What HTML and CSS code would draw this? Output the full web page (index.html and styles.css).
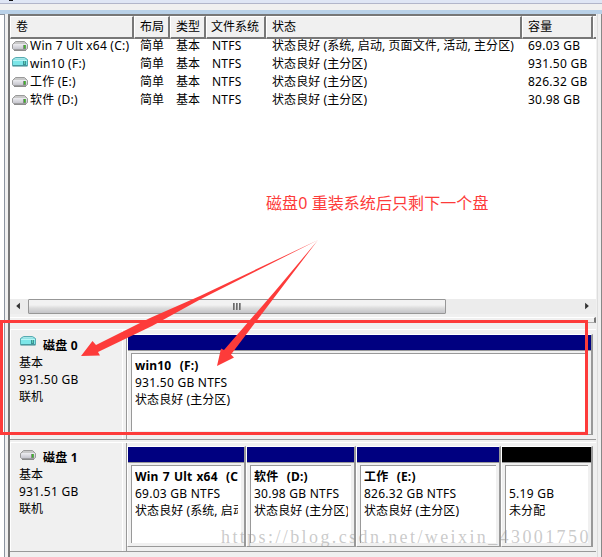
FILE: index.html
```html
<!DOCTYPE html>
<html lang="zh-CN">
<head>
<meta charset="utf-8">
<title>磁盘管理</title>
<link rel="stylesheet" href="styles.css">
</head>
<body>
<svg class="defs" width="0" height="0">
  <defs>
    <linearGradient id="grayTop" x1="0" y1="0" x2="0" y2="1"><stop offset="0" stop-color="#c4c4c4"/><stop offset="1" stop-color="#a5a5a5"/></linearGradient>
    <linearGradient id="grayFace" x1="0" y1="0" x2="0" y2="1"><stop offset="0" stop-color="#ededf1"/><stop offset="1" stop-color="#c2c2ca"/></linearGradient>
    <symbol id="drive" viewBox="0 0 16 10">
      <path d="M3.5 .5H12.5L15.5 3.5V7.5L14 9H2L.5 7.5V3.5Z" fill="url(#grayTop)" stroke="#9a9a9a"/>
      <path d="M4 1H12L14 3H2Z" fill="#c9c9c9"/>
      <rect x="1" y="3" width="14" height="5.5" rx="1" fill="url(#grayFace)"/>
      <path d="M2 9.2H14" stroke="#707070"/>
      <rect x="11" y="4" width="3" height="4" fill="#8a8a8a"/><rect x="12" y="4" width="1.5" height="3.5" fill="#3cb828"/>
    </symbol>
    <symbol id="driveCyan" viewBox="0 0 16 10">
      <path d="M3.5 .5H12.5L15.5 2.5V8.5H.5V2.5Z" fill="#7fdde0" stroke="#58aab0"/>
      <path d="M4 1H12L14 2.5H2Z" fill="#a5e6e8"/>
      <rect x="1" y="3" width="14" height="5" fill="#7ce6e8"/>
      <path d="M1 3.5H15" stroke="#b8f6f6"/>
      <path d="M.5 9H15.5" stroke="#34868c"/>
      <rect x="11" y="4" width="3" height="4" fill="#3b9398"/><rect x="12" y="4" width="1" height="3" fill="#5fd0b0"/>
    </symbol>
  </defs>
</svg>
<div class="window">
  <div class="title-strip"><i></i></div>
  <div class="tool-strip"></div>
  <div class="blue-strip"></div>
  <div class="main">
    <div class="tree-edge"></div>
    <div class="pane">
      <div class="list">
        <div class="row head"><span>卷</span><span>布局</span><span>类型</span><span>文件系统</span><span>状态</span><span>容量</span><span></span></div>
        <div class="row"><span><svg class="ico"><use href="#drive"/></svg><b>Win 7 Ult x64 (C:)</b></span><span>简单</span><span>基本</span><span>NTFS</span><span>状态良好 (系统, 启动, 页面文件, 活动, 主分区)</span><span>69.03 GB</span></div>
        <div class="row"><span><svg class="ico up"><use href="#driveCyan"/></svg><b>win10 (F:)</b></span><span>简单</span><span>基本</span><span>NTFS</span><span>状态良好 (主分区)</span><span>931.50 GB</span></div>
        <div class="row"><span><svg class="ico"><use href="#drive"/></svg><b>工作 (E:)</b></span><span>简单</span><span>基本</span><span>NTFS</span><span>状态良好 (主分区)</span><span>826.32 GB</span></div>
        <div class="row"><span><svg class="ico"><use href="#drive"/></svg><b>软件 (D:)</b></span><span>简单</span><span>基本</span><span>NTFS</span><span>状态良好 (主分区)</span><span>30.98 GB</span></div>
      </div>
      <div class="scrollbar">
        <svg class="arrow" viewBox="0 0 18 16"><path d="M10 4V11L6 7.5Z" fill="#333"/></svg>
        <div class="thumb"><i></i><i></i><i></i></div>
        <svg class="arrow right" viewBox="0 0 18 16"><path d="M7 4V11L11 7.5Z" fill="#333"/></svg>
      </div>
      <div class="splitter"></div>
      <div class="disk">
        <div class="label">
          <div class="disk-name"><svg class="ico"><use href="#driveCyan"/></svg><strong>磁盘 0</strong></div>
          <div>基本</div><div class="latin">931.50 GB</div><div>联机</div>
        </div>
        <div class="volumes">
          <div class="volume full"><div class="bar"></div><div class="box"><div class="text"><strong>win10&nbsp; (F:)</strong><div class="latin">931.50 GB NTFS</div><div>状态良好 (主分区)</div></div></div></div>
        </div>
      </div>
      <div class="disk second">
        <div class="label">
          <div class="disk-name"><svg class="ico"><use href="#drive"/></svg><strong>磁盘 1</strong></div>
          <div>基本</div><div class="latin">931.51 GB</div><div>联机</div>
        </div>
        <div class="volumes">
          <div class="volume c"><div class="bar"></div><div class="box"><div class="text"><strong>Win 7 Ult x64&nbsp; (C</strong><div class="latin">69.03 GB NTFS</div><div>状态良好 (系统, 启动</div></div></div></div>
          <div class="volume d"><div class="bar"></div><div class="box"><div class="text"><strong>软件&nbsp; (D:)</strong><div class="latin">30.98 GB NTFS</div><div>状态良好 (主分区)</div></div></div></div>
          <div class="volume e"><div class="bar"></div><div class="box"><div class="text"><strong>工作&nbsp; (E:)</strong><div class="latin">826.32 GB NTFS</div><div>状态良好 (主分区)</div></div></div></div>
          <div class="volume free"><div class="bar"></div><div class="box"><div class="text"><strong>&nbsp;</strong><div class="latin">5.19 GB</div><div>未分配</div></div></div></div>
        </div>
      </div>
    </div>
    <div class="right-edge"></div>
  </div>
  <div class="note">磁盘0 重装系统后只剩下一个盘</div>
  <div class="highlight"></div>
  <svg class="arrows" viewBox="0 0 602 557">
    <path fill="#fd3b3a" d="M318 240L200 296L150 318L96 345L92.5 341L81 356L100 355.5L98 352L152 326L201 299Z"/>
    <path fill="#fd3b3a" d="M318 240L276 290L224 350L221 348.5L217 366L234 357.5L231 354.5L280 290Z"/>
  </svg>
  <div class="watermark">https://blog.csdn.net/weixin_43001750</div>
</div>
</body>
</html>
```
FILE: styles.css
```css
* { box-sizing: border-box; }
body { margin: 0; overflow: hidden; }
.defs { position: absolute; }
.window {
  position: relative; width: 602px; height: 557px; overflow: hidden;
  display: flex; flex-direction: column; background: #f0f0f0; color: #000;
  font: 12px/18px "Noto Sans", "Noto Sans CJK SC", sans-serif; white-space: nowrap;
  letter-spacing: .08px;
}
.title-strip { height: 4px; background: #dfe6f5; border-bottom: 1px solid #b2b6ca; }
.title-strip i { display: block; width: 4px; height: 1px; margin-left: 9px; background: #111; }
.tool-strip { height: 6px; background: #f0f0f0; }
.blue-strip { height: 4px; background: #b9d1e8; }
.main { flex: 1; display: flex; }
.tree-edge { width: 5px; background: #fff; border-right: 1px solid #8c94a0; border-top: 1px solid #8c94a0; }
.pane { width: 588px; margin-left: 3px; border-left: 2px solid #777; border-top: 2px solid #777; display: flex; flex-direction: column; }
.right-edge { flex: 1; margin-left: 1px; border-left: 1px solid #ddd; border-right: 1px solid #888; }

.list { height: 283px; background: #fff; overflow: hidden; }
.row { display: grid; grid-template-columns: 124px 36px 36px 60px 256px 71px 3px; height: 18px; }
.row span { padding-left: 6px; }
.row span:first-child { padding-left: 2px; display: flex; }
.row b { font-weight: 400; margin-left: 2px; letter-spacing: .22px; }
.row span:nth-child(4), .row span:nth-child(6), .latin { letter-spacing: .25px; }
.head { height: 21px; }
.head span { background: #f0f0f0; border: 1px solid #fff; border-right: 2px solid #777; border-bottom: 2px solid #777; padding-left: 5px; line-height: 20px; }
.head span:first-child { padding-left: 5px; }
.row.head span:nth-child(4) { padding-left: 4px; letter-spacing: 0; }
.head span:last-child { border-right: 0; padding: 0; }
.ico { width: 16px; height: 10px; margin-top: 4px; flex: none; }
.ico.up { margin-top: 2px; }

.scrollbar { height: 15px; display: flex; background: #ececec; }
.arrow { width: 18px; height: 15px; }
.arrow.right { margin-left: auto; }
.thumb { width: 418px; height: 15px; border: 1px solid #979797; border-radius: 1px; background: linear-gradient(#f2f2f2 0 5px, #dcdcdc 8px, #c4c4c8); display: flex; justify-content: center; gap: 1px; padding-top: 3px; }
.thumb i { width: 2px; height: 7px; background: linear-gradient(90deg, #555, #aaa); }
.splitter { height: 6px; margin-top: 3px; border-top: 1px solid #fff; border-right: 2px solid #777; border-bottom: 1px solid #aaa; }

.disk { display: flex; height: 111px; margin-top: 6px; border-top: 1px solid #fff; border-bottom: 1px solid #999; }
.disk.second { margin-top: 2px; height: 110px; }
.label { width: 117px; padding: 7px 0 0 9px; border-right: 1px solid #999; line-height: 17px; box-shadow: inset 1px 0 #fff, inset -3px 0 #f0f0f0, inset -4px 0 #fff; }
.second .label { padding-top: 6px; }
.disk-name { display: flex; height: 17px; }
.disk-name .ico { margin: -1px 7px 0 1px; }
.second .disk-name .ico { margin-top: 1px; }
.volumes { padding-top: 4px; display: flex; width: 467px; }
.second .volumes { padding-top: 3px; }
.volume { height: 101px; border: 1px solid #fff; border-right: 2px solid #999; border-bottom: 1px solid #999; display: flex; flex-direction: column; flex: none; }
.full { width: 466px; } .c { width: 119px; } .d { width: 110px; } .e { width: 145px; } .free { width: 92px; }
.bar { height: 16px; background: #000080; border-bottom: 1px solid #999; }
.free .bar { background: #000; }
.box { margin: 2px 3px 3px; flex: 1; border-top: 1px solid #999; border-left: 1px solid #999; background: #fff; padding: 3px 3px 0; overflow: hidden; }
.second .box { padding-top: 2px; }
.text { line-height: 17px; overflow: hidden; }
strong { font-weight: 700; display: block; letter-spacing: .2px; word-spacing: .8px; }
.disk-name strong { word-spacing: 0; }

.note { position: absolute; left: 266px; top: 191px; color: #fd3b3a; font-size: 16px; line-height: 24px; }
.highlight { position: absolute; left: 0; top: 320px; width: 588px; height: 115px; border: 3px solid #fd3b3a; }
.arrows { position: absolute; left: 0; top: 0; width: 602px; height: 557px; }
.watermark { position: absolute; left: 221px; top: 527px; font: 18px/20px "Liberation Serif", serif; letter-spacing: 2.4px; color: rgba(150, 150, 150, .5); }
```
